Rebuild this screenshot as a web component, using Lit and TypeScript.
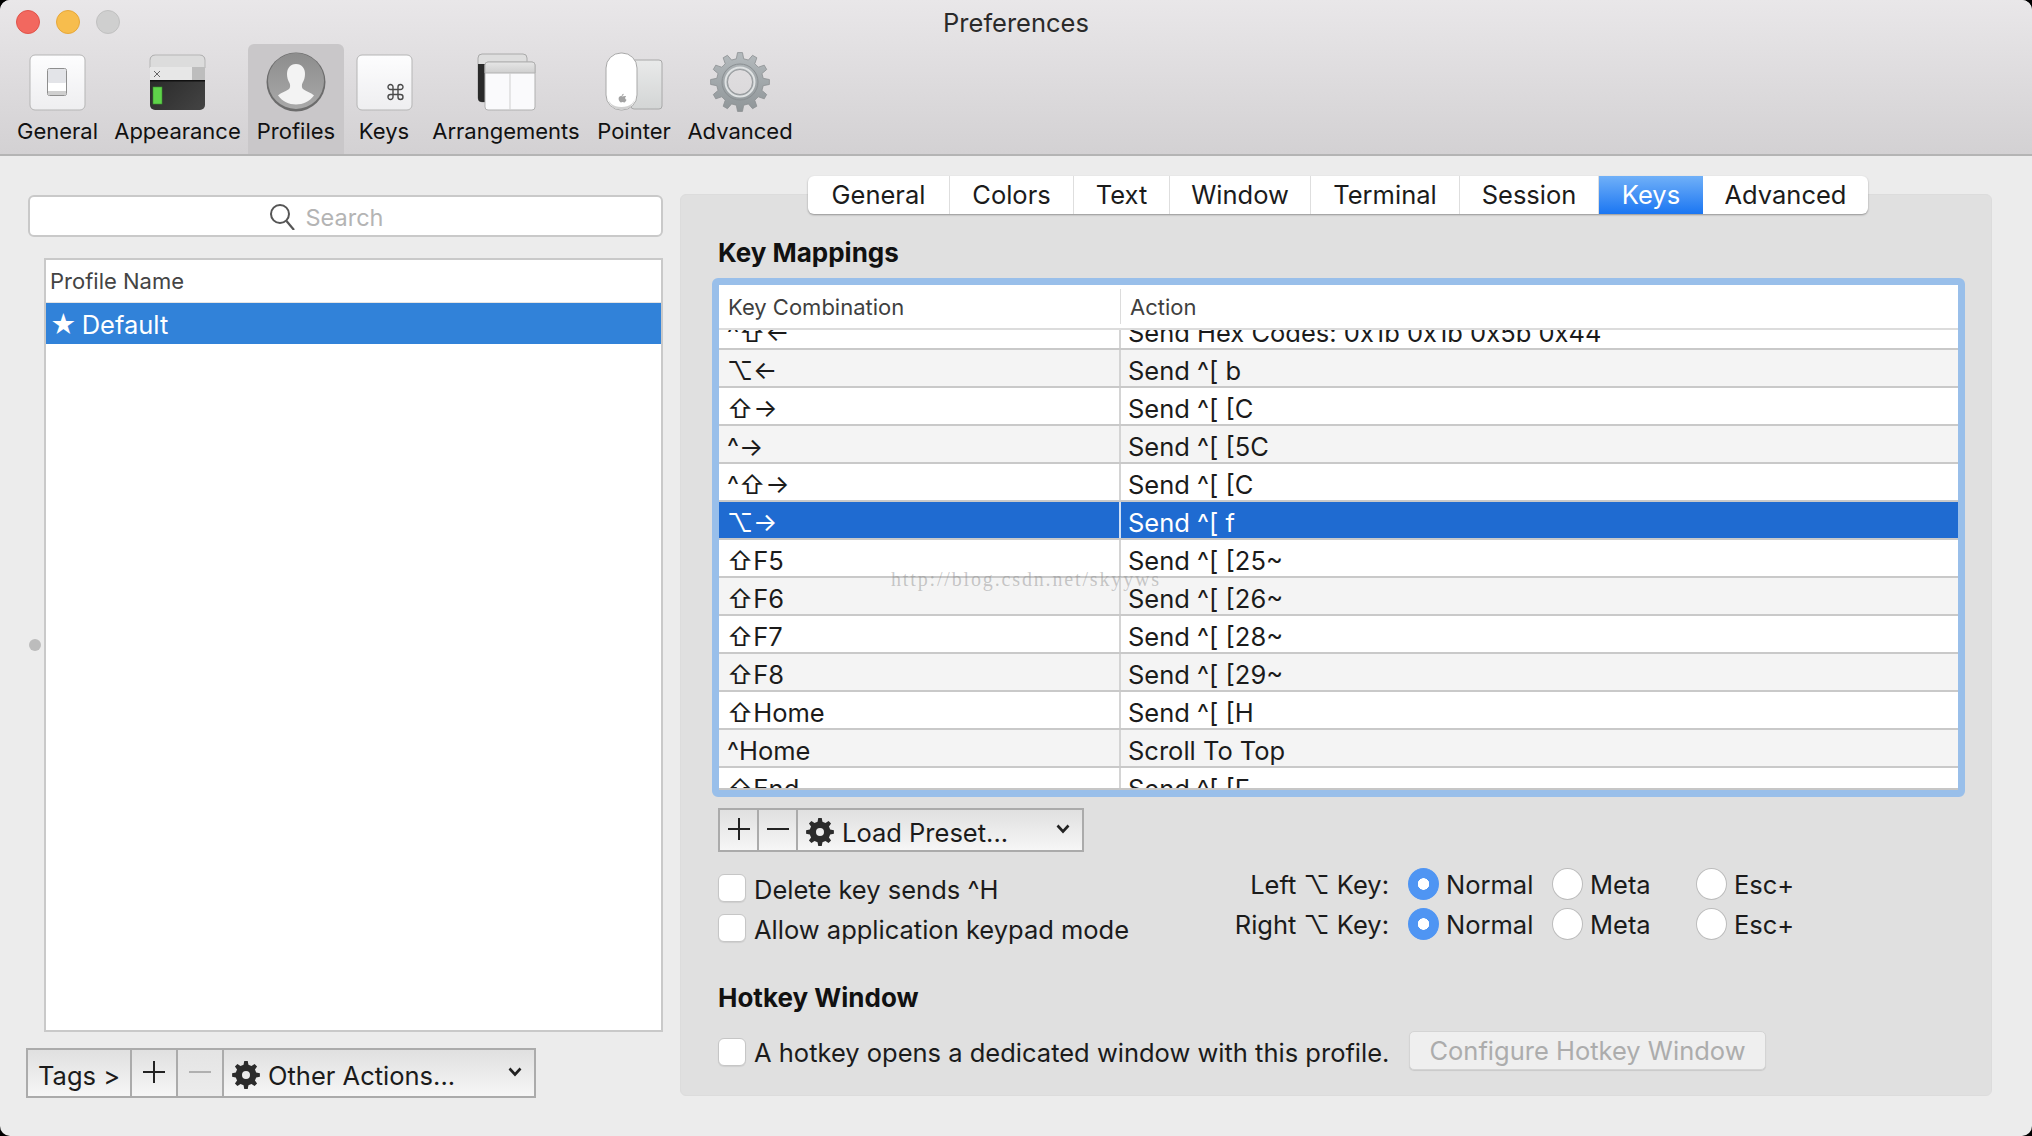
import { LitElement, html, css, svg } from "lit";
import { customElement } from "lit/decorators.js";

function gearPath(cx: number, cy: number, ro: number, ri: number, teeth: number, hole: number) {
  const step = (Math.PI * 2) / teeth;
  let d = "";
  for (let i = 0; i < teeth; i++) {
    const a = i * step - Math.PI / 2;
    const pts: [number, number][] = [
      [ri, a - step * 0.3],
      [ro, a - step * 0.16],
      [ro, a + step * 0.16],
      [ri, a + step * 0.3],
    ];
    pts.forEach(([r, t], j) => {
      const x = (cx + r * Math.cos(t)).toFixed(2);
      const y = (cy + r * Math.sin(t)).toFixed(2);
      d += (i === 0 && j === 0 ? "M" : "L") + x + " " + y + " ";
    });
  }
  d += "Z ";
  d += `M${cx - hole} ${cy} a${hole} ${hole} 0 1 0 ${hole * 2} 0 a${hole} ${hole} 0 1 0 ${-hole * 2} 0 Z`;
  return d;
}

const smallGear = html`<svg class="gear" width="28" height="30" viewBox="0 0 28 30"><path fill="#2b2b2b" fill-rule="evenodd" d=${gearPath(14, 15, 14, 10.5, 8, 4)}></path></svg>`;
const chevron = html`<svg class="chev" width="14" height="10" viewBox="0 0 14 10"><path d="M1.5 1.5 L7 7.5 L12.5 1.5" fill="none" stroke="#222" stroke-width="2.6"></path></svg>`;
const plus = (c = "#222") => html`<svg width="22" height="22" viewBox="0 0 22 22"><path d="M11 0V22M0 11H22" stroke=${c} stroke-width="2"></path></svg>`;
const minus = (c = "#222") => html`<svg width="22" height="22" viewBox="0 0 22 22"><path d="M0 11H22" stroke=${c} stroke-width="2"></path></svg>`;

const defs = svg`
  <linearGradient id="tile" x1="0" y1="0" x2="0" y2="1"><stop offset="0" stop-color="#fdfdfe"/><stop offset="1" stop-color="#eeeef0"/></linearGradient>
  <linearGradient id="strip" x1="0" y1="0" x2="0" y2="1"><stop offset="0" stop-color="#e6e6e6"/><stop offset="1" stop-color="#cfcfcf"/></linearGradient>
  <linearGradient id="term" x1="0" y1="0" x2="1" y2="1"><stop offset="0" stop-color="#222"/><stop offset="1" stop-color="#444"/></linearGradient>
  <linearGradient id="disc" x1="0" y1="0" x2="0" y2="1"><stop offset="0" stop-color="#8d8d8d"/><stop offset="1" stop-color="#a9a9a9"/></linearGradient>
  <linearGradient id="pad" x1="0" y1="0" x2="0" y2="1"><stop offset="0" stop-color="#e9eaea"/><stop offset="1" stop-color="#d3d5d5"/></linearGradient>
  <linearGradient id="gearg" x1="0" y1="0" x2="0" y2="1"><stop offset="0" stop-color="#b4babd"/><stop offset="1" stop-color="#8f9598"/></linearGradient>
`;

const icons: Record<string, unknown> = {
  General: svg`
    <rect x="1" y="1" width="55" height="55" rx="5" fill="url(#tile)" stroke="#b5b5b5" stroke-width="1"/>
    <rect x="18.5" y="14.5" width="19" height="27" rx="2" fill="#fff" stroke="#8e8e8e" stroke-width="1"/>
    <rect x="19" y="15" width="18" height="14" rx="1.5" fill="#e3e4e8"/>
    <rect x="19" y="37" width="18" height="4" fill="#cfcfcf"/>`,
  Appearance: svg`
    <rect x="1" y="1" width="55" height="55" rx="5" fill="url(#term)"/>
    <path d="M1 14V6a5 5 0 0 1 5-5H51a5 5 0 0 1 5 5V14Z" fill="#dcdcdc" stroke="#b5b5b5" stroke-width="1"/>
    <rect x="1" y="13" width="42" height="13" fill="#e7e7e7"/>
    <rect x="43" y="13" width="13" height="13" fill="#bdbdbd"/>
    <rect x="1" y="26" width="55" height="1.5" fill="#111"/>
    <path d="M5 17L11 23M11 17L5 23" stroke="#666" stroke-width="1"/>
    <rect x="4" y="33" width="9" height="17" fill="#5fd34a" stroke="#3b8f2e" stroke-width=".6"/>`,
  Profiles: svg`
    <circle cx="30" cy="30" r="29.5" fill="#6c6c6c"/>
    <circle cx="30" cy="29" r="28" fill="url(#disc)"/>
    <path d="M30 12c-6 0-9 4.500-9 10 0 3.500 1 6.500 2.500 9 1 1.700.8 5-.5 6-2.500 2-8 3.500-11 6.500 4.500 6 11 9 18 9s13.500-3 18-9c-3-3-8.500-4.500-11-6.500-1.300-1-1.500-4.300-.5-6 1.500-2.500 2.500-5.500 2.500-9 0-5.500-3-10-9-10Z" fill="#f3f3f3"/>`,
  Keys: svg`
    <rect x="1" y="1" width="55" height="55" rx="5" fill="url(#tile)" stroke="#b5b5b5" stroke-width="1"/>
    <g transform="translate(30.5 29)"><path fill="none" stroke="#4a4a4a" stroke-width="1.400" d="M6.500 6.500h5v5h-5z M6.500 6.500V4a2.500 2.500 0 1 0-2.500 2.500H6.500 M11.500 6.500H14a2.500 2.500 0 1 0-2.500-2.500V6.500 M6.500 11.500V14a2.500 2.500 0 1 1-2.500-2.500H6.500 M11.500 11.500H14a2.500 2.500 0 1 1-2.500 2.500V11.500"/></g>`,
  Arrangements: svg`
    <rect x="1" y="1" width="49" height="48" rx="4" fill="#dedede" stroke="#aaa" stroke-width="1"/>
    <path d="M1 11H50V45a4 4 0 0 1-4 4H5a4 4 0 0 1-4-4Z" fill="#2a2a2a"/>
    <rect x="8" y="9" width="50" height="48" rx="3" fill="#fafafc" stroke="#b0b0b0" stroke-width="1"/>
    <path d="M8 20V12a3 3 0 0 1 3-3H55a3 3 0 0 1 3 3V20Z" fill="url(#strip)" stroke="#b0b0b0" stroke-width="1"/>
    <path d="M33 20V56.500" stroke="#cfcfcf" stroke-width="1"/>`,
  Pointer: svg`
    <rect x="26" y="8" width="31" height="49" rx="3" fill="url(#pad)" stroke="#a8a8a8" stroke-width="1"/>
    <rect x="1" y="1" width="31" height="57" rx="15" fill="#fff" stroke="#a8a8a8" stroke-width="1"/>
    <path d="M2 42c2 13 8 15.500 14.500 15.500S29 55 31 42c-1 9-6 13-14.500 13S3 51 2 42Z" fill="#d0d0d0"/>
    <path d="M16.600 44.800c.9-1 1.900-.5 2.500-.5.700 0 1.200-.4 2-.1-1.600 1-1 3 .4 3.500-.4 1.300-1.400 2.700-2.200 2.700-.6 0-1-.4-1.700-.4s-1.100.4-1.700.4c-1.100 0-2.300-2.300-2.300-3.700 0-1.700 1.300-2.700 2.500-2.600.5 0 1.200.5 1.500.5ZM18.700 41.800c.1 1.100-.9 2.200-2 2.100-.1-1.100 1-2.100 2-2.100Z" fill="#a2a2a2"/>`,
  Advanced: svg`
    <path fill="url(#gearg)" stroke="#8b8f92" stroke-width=".8" fill-rule="evenodd" d=${gearPath(30, 30, 29.5, 23.500, 12, 12.5)}/>
    <circle cx="30" cy="30" r="18" fill="none" stroke="#8a8f92" stroke-width="1"/>
    <circle cx="30" cy="30" r="14.5" fill="none" stroke="#dfe2e3" stroke-width="2"/>`,
};

const tools = ["General", "Appearance", "Profiles", "Keys", "Arrangements", "Pointer", "Advanced"];
const iconSize: Record<string, [number, number]> = {
  General: [57, 57], Appearance: [57, 57], Profiles: [60, 59], Keys: [57, 57],
  Arrangements: [59, 58], Pointer: [58, 59], Advanced: [60, 59],
};
const tabs = ["General", "Colors", "Text", "Window", "Terminal", "Session", "Keys", "Advanced"];
const rows: [string, string][] = [
  ["^⇧←", "Send Hex Codes: 0x1b 0x1b 0x5b 0x44"],
  ["⌥←", "Send ^[ b"],
  ["⇧→", "Send ^[ [C"],
  ["^→", "Send ^[ [5C"],
  ["^⇧→", "Send ^[ [C"],
  ["⌥→", "Send ^[ f"],
  ["⇧F5", "Send ^[ [25~"],
  ["⇧F6", "Send ^[ [26~"],
  ["⇧F7", "Send ^[ [28~"],
  ["⇧F8", "Send ^[ [29~"],
  ["⇧Home", "Send ^[ [H"],
  ["^Home", "Scroll To Top"],
  ["⇧End", "Send ^[ [F"],
];

@customElement("app-root")
export class AppRoot extends LitElement {
  static styles = css`
    :host { display: block; width: 2032px; height: 1136px; background: #000; overflow: hidden;
      font-family: "Inter", "DejaVu Sans", sans-serif; font-size: 25.5px; color: #1b1b1b; }
    * { box-sizing: border-box; }
    .win { height: 1136px; background: #ececec; border-radius: 10px; display: flex; flex-direction: column; overflow: hidden; position: relative; }
    .top { height: 156px; flex: none; background: linear-gradient(#e9e7e9, #d3d1d3); border-bottom: 2px solid #b4b4b4; position: relative; }
    .title { height: 44px; display: flex; align-items: center; justify-content: center; color: #2a2a2a; }
    .lights { position: absolute; left: 16px; top: 10px; display: flex; gap: 16px; }
    .light { width: 24px; height: 24px; border-radius: 50%; }
    .r { background: #f2685f; border: 1px solid #e0534a; }
    .y { background: #f7bd4d; border: 1px solid #e6a73a; }
    .g { background: #cfcfcf; border: 1px solid #c0c0c0; }
    .tools { display: grid; grid-template-columns: 99px 141px 96px 80px 164px 92px 120px; padding-left: 8px; height: 110px; }
    .tool { display: flex; flex-direction: column; align-items: center; border-radius: 6px 6px 0 0; }
    .tool.on { background: #c9c7c9; }
    .tool svg { display: block; overflow: visible; }
    .ico { height: 70px; display: flex; align-items: flex-end; padding-bottom: 3px; }
    .tl { font-size: 22px; line-height: 26px; margin-top: 4px; color: #111; white-space: nowrap; }
    .body { flex: 1; display: flex; padding-left: 28px; gap: 17px; min-height: 0; }
    .left { width: 635px; padding: 39px 0 38px; display: flex; flex-direction: column; }
    .search { height: 42px; background: #fff; border: 2px solid #c9c9c9; border-radius: 6px; display: flex; align-items: center; justify-content: center; gap: 11px; color: #b4b4b4; flex: none; padding-right: 39px; font-size: 23.5px; }
    .search span { padding-top: 3px; }
    .listwrap { flex: 1; display: flex; margin-top: 21px; min-height: 0; }
    .gutter { width: 16px; display: flex; align-items: center; flex: none; padding-left: 1px; }
    .dot { width: 12px; height: 12px; border-radius: 50%; background: #bcbcbc; }
    .list { flex: 1; background: #fff; border: 2px solid #c9c9c9; }
    .lh { height: 43px; padding-left: 4px; display: flex; align-items: center; font-size: 22px; color: #444; border-bottom: 1px solid #e4e4e4; }
    .ls { height: 41px; background: #3182d9; color: #fff; display: flex; align-items: center; padding: 2px 0 0 4px; gap: 5px; }
    .seg { display: flex; border: 2px solid #ababab; background: linear-gradient(#e0e0e0, #f6f6f6); flex: none; }
    .seg > div { display: flex; align-items: center; border-right: 2px solid #ababab; }
    .seg > div:last-child { border-right: 0; }
    .seg .c { justify-content: center; }
    .seg .off { background: linear-gradient(#e4e4e4, #ececec); }
    .barl { margin: 16px 0 0 -2px; width: 510px; height: 50px; }
    .barl .tags { width: 104px; padding: 4px 0 0 10px; }
    .barl .c { width: 46px; padding-bottom: 3px; }
    .barl .m { flex: 1; padding: 4px 0 0 8px; }
    .gear { flex: none; }
    .m .lab { margin-left: 8px; flex: 1; white-space: nowrap; }
    .chev { margin-right: 12px; margin-bottom: 6px; }
    .right { width: 1312px; padding: 38px 0 40px; }
    .panel { height: 100%; background: #e0e0e0; border-radius: 6px; padding: 0 0 0 37px; border: 1px solid #dcdcdc; }
    .tabs { display: grid; grid-template-columns: 142px 124px 96px 141px 149px 139px 104px 165px; width: 1060px; height: 38px; margin: -19px 0 0 90px; background: #fff; border-radius: 6px; box-shadow: 0 1px 2px rgba(0,0,0,.35); overflow: hidden; }
    .tab { display: flex; align-items: center; justify-content: center; border-right: 1px solid #dedede; padding-bottom: 1px; }
    .tab:last-child { border-right: 0; }
    .tab.on { background: linear-gradient(#70b0f8, #1b76f2); color: #fff; border-right: 0; }
    h3 { margin: 0; font-size: 26px; line-height: 30px; font-weight: 700; color: #111; }
    .h1 { margin-top: 24px; }
    .ring { margin: 10px 0 0 -6px; width: 1253px; height: 519px; border: 7px solid #99bfea; border-radius: 6px; background: #fff; display: flex; flex-direction: column; }
    .thead { height: 45px; flex: none; display: grid; grid-template-columns: 402px 1fr; border-bottom: 2px solid #dcdcdc; font-size: 22px; color: #3f3f3f; }
    .thead div { display: flex; align-items: center; }
    .thead div:first-child { border-right: 1px solid #dcdcdc; margin: 4px 0; padding-left: 9px; }
    .thead div:last-child { padding-left: 9px; }
    .view { flex: 1; overflow: hidden; border-bottom: 2px solid #c6c6c6; }
    .rows { margin-top: -18px; }
    .row { height: 38px; display: grid; grid-template-columns: 402px 1fr; border-bottom: 2px solid #c9c9c9; background: #fff; line-height: 36px; }
    .row:nth-child(even) { background: #f4f4f4; }
    .row.sel { background: #1f6bd1; color: #fff; border-bottom-color: #c9c9c9; }
    .row > div { padding: 3px 0 0 7px; white-space: nowrap; overflow: hidden; }
    .row > div:first-child { border-right: 2px solid #d4d4d4; padding-left: 8px; }
    .row.sel > div:first-child { border-right-color: #cfdff5; }
    .wm { position: absolute; left: 891px; top: 567px; font-family: "Liberation Serif", serif; font-size: 20px; letter-spacing: 1.85px; line-height: 24px; color: rgba(130,130,130,.42); pointer-events: none; white-space: nowrap; }
    .barr { margin-top: 11px; width: 366px; height: 44px; }
    .barr .c { width: 39px; padding-bottom: 2px; }
    .barr .m { flex: 1; padding: 4px 0 0 8px; }
    .opts { display: flex; margin-top: 16px; }
    .checks { width: 507px; padding-top: 6px; display: flex; flex-direction: column; gap: 12px; }
    .chk { display: flex; align-items: center; gap: 8px; height: 28px; white-space: nowrap; }
    .lbl { padding-top: 2px; }
    .box { width: 28px; height: 28px; flex: none; background: #fff; border: 1px solid #c6c6c6; border-radius: 6px; box-shadow: 0 1px 1px rgba(0,0,0,.08); }
    .radios { display: grid; grid-template-columns: 164px 144px 144px 144px; row-gap: 8px; grid-auto-rows: 32px; align-items: center; }
    .rl { text-align: right; white-space: nowrap; padding-top: 1px; }
    .rad { display: flex; align-items: center; gap: 7px; margin-left: 19px; width: 125px; white-space: nowrap; }
    .rad span:last-child { padding-top: 1px; }
    .dotr { width: 31px; height: 32px; border-radius: 50%; flex: none; background: #fff; border: 1px solid #bcbcbc; }
    .dotr.on { background: radial-gradient(circle, #fff 0 5.500px, #4f95f3 6px); border-color: #4f95f3; }
    .h2 { margin-top: 41px; }
    .hot { display: flex; margin-top: 18px; height: 39px; }
    .hot .chk { width: 691px; margin-top: 7px; }
    .hot .lbl { padding-top: 0; }
    .btn { width: 357px; height: 39px; background: #efefef; border: 1px solid #d4d4d4; border-radius: 5px; color: #acacac; display: flex; align-items: center; justify-content: center; box-shadow: 0 1px 1px rgba(0,0,0,.1); white-space: nowrap; padding-bottom: 1px; }
  `;

  private radioRow(label: string) {
    return html`
      <div class="rl">${label} ⌥ Key:</div>
      <div class="rad"><span class="dotr on"></span><span>Normal</span></div>
      <div class="rad"><span class="dotr"></span><span>Meta</span></div>
      <div class="rad"><span class="dotr"></span><span>Esc+</span></div>`;
  }

  render() {
    return html`
      <div class="win">
        <div class="top">
          <div class="lights"><span class="light r"></span><span class="light y"></span><span class="light g"></span></div>
          <div class="title">Preferences</div>
          <div class="tools">
            ${tools.map((t) => {
              const [w, h] = iconSize[t];
              return html`<div class="tool ${t === "Profiles" ? "on" : ""}">
                <div class="ico"><svg width=${w} height=${h} viewBox="0 0 ${w} ${h}"><defs>${defs}</defs>${icons[t]}</svg></div>
                <div class="tl">${t}</div>
              </div>`;
            })}
          </div>
        </div>
        <div class="body">
          <div class="left">
            <div class="search">
              <svg width="26" height="27" viewBox="0 0 26 27"><circle cx="11" cy="11" r="9" fill="none" stroke="#555" stroke-width="2"/><path d="M17.500 18L25 27" stroke="#555" stroke-width="2.200"/></svg>
              <span>Search</span>
            </div>
            <div class="listwrap">
              <div class="gutter"><span class="dot"></span></div>
              <div class="list">
                <div class="lh">Profile Name</div>
                <div class="ls"><span>★</span><span>Default</span></div>
              </div>
            </div>
            <div class="seg barl">
              <div class="tags">Tags &gt;</div>
              <div class="c">${plus()}</div>
              <div class="c off">${minus("#b0b0b0")}</div>
              <div class="m">${smallGear}<span class="lab">Other Actions...</span>${chevron}</div>
            </div>
          </div>
          <div class="right">
            <div class="panel">
              <div class="tabs">
                ${tabs.map((t) => html`<div class="tab ${t === "Keys" ? "on" : ""}">${t}</div>`)}
              </div>
              <h3 class="h1">Key Mappings</h3>
              <div class="ring">
                <div class="thead"><div>Key Combination</div><div>Action</div></div>
                <div class="view"><div class="rows">
                  ${rows.map((r) => html`<div class="row ${r[0] === "⌥→" ? "sel" : ""}"><div>${r[0]}</div><div>${r[1]}</div></div>`)}
                </div></div>
              </div>
              <div class="seg barr">
                <div class="c">${plus()}</div>
                <div class="c">${minus()}</div>
                <div class="m">${smallGear}<span class="lab">Load Preset...</span>${chevron}</div>
              </div>
              <div class="opts">
                <div class="checks">
                  <div class="chk"><span class="box"></span><span class="lbl">Delete key sends ^H</span></div>
                  <div class="chk"><span class="box"></span><span class="lbl">Allow application keypad mode</span></div>
                </div>
                <div class="radios">${this.radioRow("Left")}${this.radioRow("Right")}</div>
              </div>
              <h3 class="h2">Hotkey Window</h3>
              <div class="hot">
                <div class="chk"><span class="box"></span><span class="lbl">A hotkey opens a dedicated window with this profile.</span></div>
                <div class="btn">Configure Hotkey Window</div>
              </div>
            </div>
          </div>
        </div>
        <div class="wm">http://blog.csdn.net/skyyws</div>
      </div>
    `;
  }
}
